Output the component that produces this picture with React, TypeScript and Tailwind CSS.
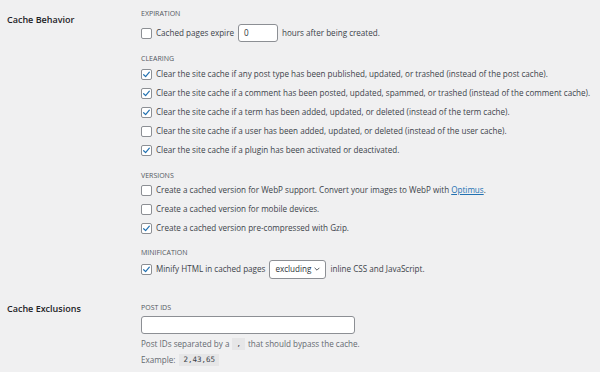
import React from "react";

const font = { fontFamily: '"Open Sans", "Noto Sans", sans-serif' };
const mono = { fontFamily: '"DejaVu Sans Mono", monospace' };

function Check({ checked }: { checked?: boolean }) {
  return (
    <span className="flex h-[11px] w-[11px] shrink-0 items-center justify-center rounded-[2px] border border-[#8c8f94] bg-white">
      {checked && (
        <svg viewBox="0 0 12 12" className="h-[9px] w-[9px]">
          <path d="M2.2 6.3 L4.8 8.8 L9.8 2.8" fill="none" stroke="#2271b1" strokeWidth="1.6" strokeLinecap="round" strokeLinejoin="round" />
        </svg>
      )}
    </span>
  );
}

function Heading({ children, className = "" }: { children: React.ReactNode; className?: string }) {
  return <div className={`h-[10px] text-[7px] leading-[10px] uppercase text-[#50575e] ${className}`}>{children}</div>;
}

function Row({ checked, children }: { checked?: boolean; children: React.ReactNode }) {
  return (
    <div className="flex h-[19px] items-center gap-[4px] whitespace-nowrap">
      <Check checked={checked} />
      <span>{children}</span>
    </div>
  );
}

const CLEARING = [
  { checked: true, text: "Clear the site cache if any post type has been published, updated, or trashed (instead of the post cache)." },
  { checked: true, text: "Clear the site cache if a comment has been posted, updated, spammed, or trashed (instead of the comment cache)." },
  { checked: true, text: "Clear the site cache if a term has been added, updated, or deleted (instead of the term cache)." },
  { checked: false, text: "Clear the site cache if a user has been added, updated, or deleted (instead of the user cache)." },
  { checked: true, text: "Clear the site cache if a plugin has been activated or deactivated." },
];

export default function App() {
  return (
    <div className="h-[372px] w-[600px] overflow-hidden bg-[#f0f0f1] text-[8.1px] text-[#3c434a]" style={font}>
      {/* Cache Behavior */}
      <div className="flex pt-[9px]">
        <div className="w-[141px] shrink-0 pl-[7px] pt-[6px] text-[9px] font-semibold leading-[10px] text-[#1d2327]">Cache Behavior</div>
        <div className="flex flex-col">
          <Heading>Expiration</Heading>
          <div className="mt-[5px] flex h-[18px] items-center gap-[4px] whitespace-nowrap">
            <Check />
            <span>Cached pages expire</span>
            <span className="flex h-[18px] w-[40px] items-center rounded-[3px] border border-[#8c8f94] bg-white pl-[5px] text-[#2c3338]">0</span>
            <span>hours after being created.</span>
          </div>

          <Heading className="mt-[12px]">Clearing</Heading>
          <div className="mt-[1px] flex flex-col">
            {CLEARING.map((c) => (
              <Row key={c.text} checked={c.checked}>{c.text}</Row>
            ))}
          </div>

          <Heading className="mt-[11px]">Versions</Heading>
          <Row>
            Create a cached version for WebP support. Convert your images to WebP with{" "}
            <a className="text-[#2271b1] underline">Optimus</a>.
          </Row>
          <Row>Create a cached version for mobile devices.</Row>
          <Row checked>Create a cached version pre-compressed with Gzip.</Row>

          <Heading className="mt-[10px]">Minification</Heading>
          <div className="mt-[1px] flex h-[20px] items-center gap-[4px] whitespace-nowrap">
            <Check checked />
            <span>Minify HTML in cached pages</span>
            <span className="flex h-[19px] w-[57px] items-center justify-between rounded-[3px] border border-[#8c8f94] bg-white pl-[5px] pr-[4px] text-[#2c3338]">
              excluding
              <svg viewBox="0 0 10 10" className="h-[8px] w-[8px]">
                <path d="M2 3.5 L5 6.5 L8 3.5" fill="none" stroke="#50575e" strokeWidth="1.2" />
              </svg>
            </span>
            <span>inline CSS and JavaScript.</span>
          </div>
        </div>
      </div>

      {/* Cache Exclusions */}
      <div className="mt-[24px] flex">
        <div className="w-[141px] shrink-0 pl-[7px] pt-[1px] text-[9px] font-semibold leading-[10px] text-[#1d2327]">Cache Exclusions</div>
        <div className="flex flex-col">
          <Heading>Post IDs</Heading>
          <div className="mt-[3px] h-[18px] w-[214px] rounded-[3px] border border-[#8c8f94] bg-white" />
          <div className="mt-[2px] flex h-[16px] items-center whitespace-nowrap text-[#646970]">
            Post IDs separated by a
            <code className="mx-[3px] bg-[#e6e6e7] px-[4px] text-[7.5px] leading-[12px] text-[#3c434a]" style={mono}>,</code>
            that should bypass the cache.
          </div>
          <div className="flex h-[16px] items-center whitespace-nowrap text-[#646970]">
            Example:
            <code className="ml-[4px] bg-[#e6e6e7] px-[4px] text-[7.5px] leading-[12px] text-[#3c434a]" style={mono}>2,43,65</code>
          </div>
        </div>
      </div>
    </div>
  );
}
